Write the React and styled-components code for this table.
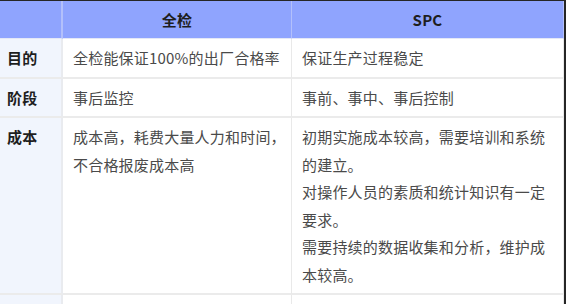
import React from "react";
import styled, { createGlobalStyle } from "styled-components";

const GlobalStyle = createGlobalStyle`
    html, body {
        margin: 0;
        padding: 0;
        background: #262626;
        overflow: hidden;
    }
    body {
        font-family: "Noto Sans CJK SC", "Noto Sans", sans-serif;
    }
`;

const Frame = styled.div`
    width: 564px;
    height: 304px;
    padding-top: 1px;
    box-sizing: border-box;
    overflow: hidden;
`;

const Table = styled.table`
    width: 564px;
    table-layout: fixed;
    border-collapse: separate;
    border-spacing: 0;
    background: #fff;
    font-size: 15px;
    letter-spacing: 0.2px;
`;

const HeadCell = styled.th`
    height: 38px;
    padding: 0;
    background: #8fa4fe;
    color: #1e1e1e;
    font-weight: bold;
    text-align: center;
    border-right: ${p => (p.$first ? "2px solid #b3c0fb" : "1px solid #b3c0fb")};
    border-bottom: 1px solid #e4e8f6;
    box-sizing: border-box;
`;

const Label = styled.td`
    padding: 5px 0 5px 7px;
    background: #f1f5fd;
    color: #1e1e1e;
    font-weight: bold;
    line-height: 27px;
    vertical-align: top;
    border-right: 2px solid #e9ebef;
    border-bottom: 2px solid #ebebeb;
`;

const Cell = styled.td`
    padding: 5px ${p => p.$padRight}px 5px 10px;
    color: #4a4a4a;
    line-height: 27.5px;
    vertical-align: top;
    border-right: 1px solid #e9e9e9;
    border-bottom: 2px solid #ebebeb;
`;

const Para = styled.div`
    margin: 0;
`;

const rows = [
    { label: "目的", full: ["全检能保证100%的出厂合格率"], spc: ["保证生产过程稳定"] },
    { label: "阶段", full: ["事后监控"], spc: ["事前、事中、事后控制"] },
    {
        label: "成本",
        full: ["成本高，耗费大量人力和时间，不合格报废成本高"],
        spc: [
            "初期实施成本较高，需要培训和系统的建立。",
            "对操作人员的素质和统计知识有一定要求。",
            "需要持续的数据收集和分析，维护成本较高。",
        ],
    },
    { label: "", full: [""], spc: [""] },
];

export default function App() {
    return (
        <Frame>
            <GlobalStyle />
            <Table>
                <colgroup>
                    <col style={{ width: 63 }} />
                    <col style={{ width: 229 }} />
                    <col />
                </colgroup>
                <thead>
                    <tr>
                        <HeadCell $first />
                        <HeadCell>全检</HeadCell>
                        <HeadCell>SPC</HeadCell>
                    </tr>
                </thead>
                <tbody>
                    {rows.map((r, i) => (
                        <tr key={i}>
                            <Label>{r.label || "\u00a0"}</Label>
                            <Cell $padRight={2}>
                                {r.full.map((t, j) => (
                                    <Para key={j}>{t || "\u00a0"}</Para>
                                ))}
                            </Cell>
                            <Cell $padRight={12}>
                                {r.spc.map((t, j) => (
                                    <Para key={j}>{t || "\u00a0"}</Para>
                                ))}
                            </Cell>
                        </tr>
                    ))}
                </tbody>
            </Table>
        </Frame>
    );
}
